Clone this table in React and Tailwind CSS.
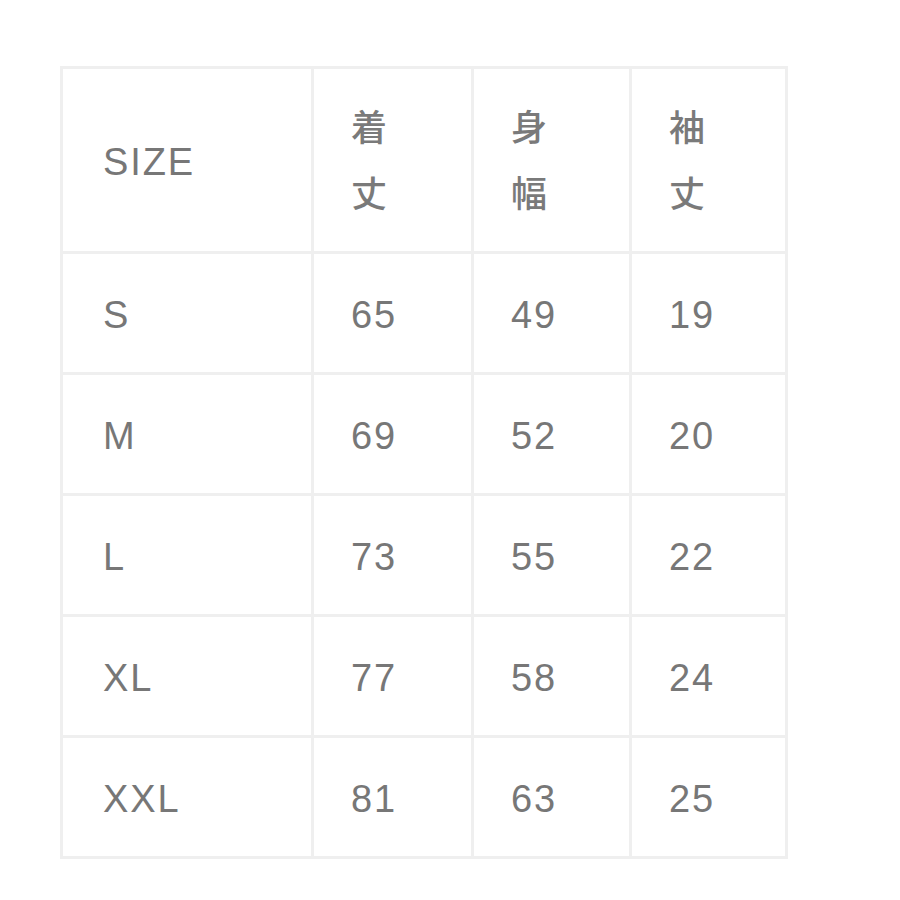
import React from "react";

const rows = [
  ["S", "65", "49", "19"],
  ["M", "69", "52", "20"],
  ["L", "73", "55", "22"],
  ["XL", "77", "58", "24"],
  ["XXL", "81", "63", "25"],
];

const latin = { fontFamily: '"Liberation Sans", Arial, sans-serif' };
const cjk = { fontFamily: '"Noto Sans CJK JP", "Noto Sans CJK SC", sans-serif' };

export default function App() {
  return (
    <div className="w-[900px] h-[900px] bg-white pt-[66px] pl-[60px]">
      <div className="grid grid-cols-[248px_157px_155px_153px] grid-rows-[182px_repeat(5,118px)] gap-[3px] p-[3px] bg-[#efefef] w-max">
        <div className="bg-white flex items-center pl-[40px] pt-[4px] text-[38px] tracking-[0.05em] text-[#777777]" style={latin}>
          SIZE
        </div>
        {["着丈", "身幅", "袖丈"].map((h) => (
          <div key={h} className="bg-white flex items-center pl-[37px] pb-[4px]">
            <div className="flex flex-col text-[36px] leading-[66px] font-medium text-[#7a7a7a]" style={cjk}>
              <span>{h[0]}</span>
              <span>{h[1]}</span>
            </div>
          </div>
        ))}
        {rows.map((r) =>
          r.map((c, i) => (
            <div
              key={r[0] + i}
              className={`bg-white flex items-center pt-[5px] text-[38px] tracking-[0.05em] text-[#777777] ${i === 0 ? "pl-[40px]" : "pl-[37px]"}`}
              style={latin}
            >
              {c}
            </div>
          ))
        )}
      </div>
    </div>
  );
}
